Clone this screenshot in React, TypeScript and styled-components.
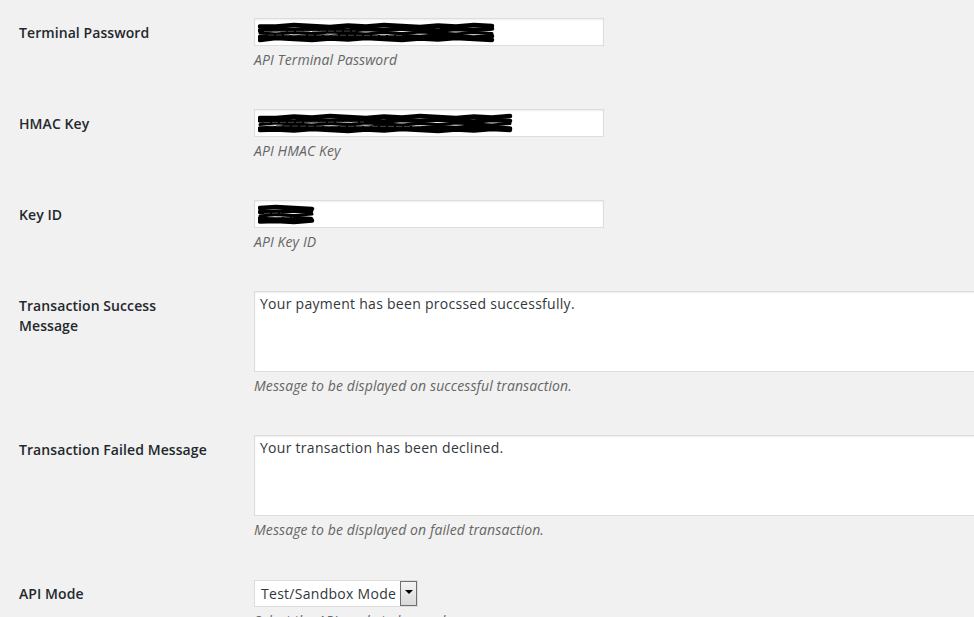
import React from "react";
import styled, { createGlobalStyle } from "styled-components";

const GlobalStyle = createGlobalStyle`
  html, body {
    margin: 0;
    padding: 0;
    background: #f1f1f1;
    overflow: hidden;
  }
  body {
    font-family: "Open Sans", "Liberation Sans", sans-serif;
    color: #23282d;
  }
`;

const Form = styled.div`
  padding: 3px 0 0 19px;
  width: 1400px;
`;

const Row = styled.div`
  display: grid;
  grid-template-columns: 235px 1fr;
  padding: 15px 0 24px;
`;

const Label = styled.div`
  width: 190px;
  padding-top: 5px;
  font-size: 14px;
  line-height: 20px;
  font-weight: 600;
  letter-spacing: 0.08px;
  color: #23282d;
`;

const Field = styled.div`
  display: flex;
  flex-direction: column;
  align-items: flex-start;
`;

const TextInput = styled.div`
  box-sizing: border-box;
  width: 350px;
  height: 28px;
  background: #fff;
  border: 1px solid #ddd;
  box-shadow: inset 0 1px 2px rgba(0, 0, 0, 0.07);
  display: flex;
  align-items: center;
  padding: 0 3px;
`;

const TextArea = styled.textarea`
  box-sizing: border-box;
  width: 780px;
  height: 81px;
  margin: 0;
  padding: 2px 5px;
  resize: none;
  background: #fff;
  border: 1px solid #ddd;
  box-shadow: inset 0 1px 2px rgba(0, 0, 0, 0.07);
  font-family: "Open Sans", "Liberation Sans", sans-serif;
  font-size: 14px;
  line-height: 20px;
  letter-spacing: 0.28px;
  color: #32373c;
  outline: none;
`;

const Description = styled.p`
  margin: 4px 0 0;
  font-size: 14px;
  line-height: 20px;
  font-style: italic;
  letter-spacing: 0.1px;
  color: #666;
`;

const SelectBox = styled.div`
  box-sizing: border-box;
  margin-top: 1px;
  width: 164px;
  height: 27px;
  display: flex;
  align-items: stretch;
  justify-content: space-between;
  background: #fff;
  border: 1px solid #ddd;
  padding: 0 0 0 6px;
`;

const SelectText = styled.span`
  font-size: 14px;
  line-height: 25px;
  letter-spacing: 0.28px;
  color: #32373c;
`;

const ArrowButton = styled.span`
  box-sizing: border-box;
  width: 17px;
  border: 1px solid #707070;
  background: linear-gradient(#f4f4f4, #d9d9d9);
  display: flex;
  align-items: center;
  justify-content: center;
  padding-bottom: 3px;
`;

const Triangle = styled.span`
  width: 0;
  height: 0;
  border-left: 4px solid transparent;
  border-right: 4px solid transparent;
  border-top: 4px solid #000;
`;

const Scribble: React.FC<{ width: number; seed: number }> = ({ width, seed }) => {
  const lines: string[] = [];
  const ys = [4, 7.5, 11, 14.5, 17];
  ys.forEach((y, i) => {
    let d = `M2 ${y + ((seed + i) % 3) * 0.5}`;
    const steps = Math.floor(width / 18);
    for (let s = 1; s <= steps; s++) {
      const x = Math.min(width - 2 - (i % 2) * 3, s * 18);
      const jy = y + (((s * 7 + i * 3 + seed) % 5) - 2) * 0.45;
      d += ` L${x} ${jy}`;
    }
    lines.push(d);
  });
  return (
    <svg width={width} height={21} viewBox={`0 0 ${width} 21`}>
      {lines.map((d, i) => (
        <path
          key={i}
          d={d}
          fill="none"
          stroke="#000"
          strokeWidth={i === 2 ? 3 : 4.5}
          strokeLinecap="round"
          strokeLinejoin="round"
        />
      ))}
      <path
        d={`M6 9.5 L${width * 0.4} 9 M10 13 L${width * 0.6} 13.5`}
        stroke="#555"
        strokeWidth={0.8}
        strokeDasharray="6 2"
        fill="none"
      />
    </svg>
  );
};

export default function App() {
  return (
    <>
      <GlobalStyle />
      <Form>
        <Row>
          <Label>Terminal Password</Label>
          <Field>
            <TextInput>
              <Scribble width={244} seed={1} />
            </TextInput>
            <Description>API Terminal Password</Description>
          </Field>
        </Row>
        <Row>
          <Label>HMAC Key</Label>
          <Field>
            <TextInput>
              <Scribble width={265} seed={2} />
            </TextInput>
            <Description>API HMAC Key</Description>
          </Field>
        </Row>
        <Row>
          <Label>Key ID</Label>
          <Field>
            <TextInput>
              <Scribble width={58} seed={3} />
            </TextInput>
            <Description>API Key ID</Description>
          </Field>
        </Row>
        <Row>
          <Label>Transaction Success Message</Label>
          <Field>
            <TextArea readOnly defaultValue="Your payment has been procssed successfully." />
            <Description>Message to be displayed on successful transaction.</Description>
          </Field>
        </Row>
        <Row>
          <Label>Transaction Failed Message</Label>
          <Field>
            <TextArea readOnly defaultValue="Your transaction has been declined." />
            <Description>Message to be displayed on failed transaction.</Description>
          </Field>
        </Row>
        <Row>
          <Label>API Mode</Label>
          <Field>
            <SelectBox>
              <SelectText>Test/Sandbox Mode</SelectText>
              <ArrowButton>
                <Triangle />
              </ArrowButton>
            </SelectBox>
            <Description>Select the API mode to be used.</Description>
          </Field>
        </Row>
      </Form>
    </>
  );
}
